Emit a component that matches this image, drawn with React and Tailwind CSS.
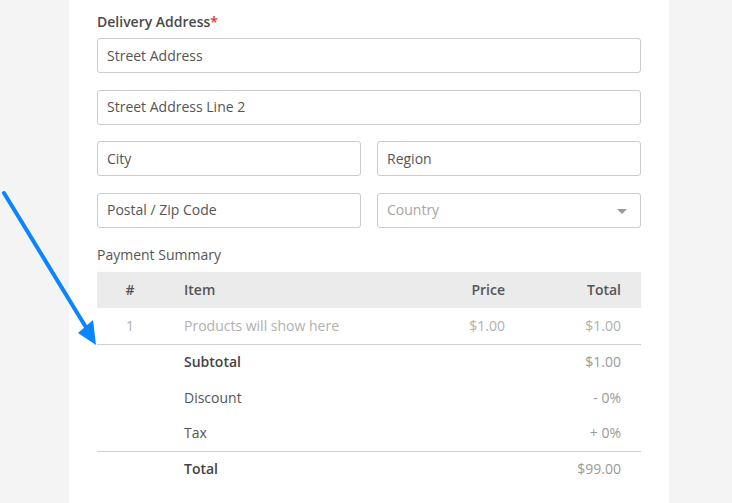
import React from 'react';

const Field = ({ placeholder, muted = false, select = false }) => (
  <div className="relative flex h-[35px] w-full items-center rounded-[3px] border border-[#cccccc] bg-white pl-[9px]">
    <span className={muted ? 'text-[#a6a6a6]' : 'text-[#555555]'}>{placeholder}</span>
    {select && (
      <svg className="absolute right-[13px] top-[15px]" width="10" height="5" viewBox="0 0 10 5">
        <path d="M0 0h10L5 5z" fill="#9a9a9a" />
      </svg>
    )}
  </div>
);

const rowGrid = 'grid grid-cols-[66px_242px_100px_136px] items-center';

const SummaryRow = ({ label, value, bold = false, h = 'h-[35px]' }) => (
  <div className={`${rowGrid} ${h}`}>
    <div />
    <div className={`pl-[21px] ${bold ? 'font-semibold text-[#444444]' : 'text-[#555555]'}`}>{label}</div>
    <div />
    <div className="pr-[20px] text-right text-[#999999]">{value}</div>
  </div>
);

export default function App() {
  return (
    <div
      className="relative min-h-[503px] w-[732px] overflow-hidden bg-[#f4f4f4] text-[14px] leading-[20px]"
      style={{ fontFamily: '"Open Sans", "Noto Sans", sans-serif' }}
    >
      <div className="ml-[69px] w-[600px] bg-white px-[28px] pt-[12px] pb-[20px] min-h-[503px]">
        <div className="mb-[6px] font-semibold text-[#4a4a4a]">
          Delivery Address<span className="text-[#e3342f]">*</span>
        </div>

        <div className="flex flex-col gap-[16.67px]">
          <Field placeholder="Street Address" />
          <Field placeholder="Street Address Line 2" />
          <div className="grid grid-cols-2 gap-[16px]">
            <Field placeholder="City" />
            <Field placeholder="Region" />
          </div>
          <div className="grid grid-cols-2 gap-[16px]">
            <Field placeholder="Postal / Zip Code" />
            <Field placeholder="Country" muted select />
          </div>
        </div>

        <div className="mt-[17px] mb-[7px] text-[#555555]">Payment Summary</div>

        <div className={`${rowGrid} h-[36px] bg-[#ebebeb] font-semibold text-[#555555]`}>
          <div className="text-center">#</div>
          <div className="pl-[21px]">Item</div>
          <div className="text-right">Price</div>
          <div className="pr-[20px] text-right">Total</div>
        </div>
        <div className={`${rowGrid} h-[37px] border-b border-[#cfcfcf] text-[#b0b0b0]`}>
          <div className="text-center">1</div>
          <div className="pl-[21px]">Products will show here</div>
          <div className="text-right">$1.00</div>
          <div className="pr-[20px] text-right">$1.00</div>
        </div>
        <SummaryRow label="Subtotal" value="$1.00" bold />
        <SummaryRow label="Discount" value="- 0%" h="h-[36px]" />
        <div className="border-b border-[#cfcfcf]">
          <SummaryRow label="Tax" value="+ 0%" />
        </div>
        <SummaryRow label="Total" value="$99.00" bold />
      </div>

      {/* pointer arrow */}
      <svg className="absolute left-0 top-[188px]" width="110" height="165" viewBox="0 0 110 165">
        <line x1="4" y1="5" x2="87" y2="141" stroke="#0a84ff" strokeWidth="4" strokeLinecap="round" />
        <path d="M96 157 L78 145 L93 132 Z" fill="#0a84ff" />
      </svg>
    </div>
  );
}
